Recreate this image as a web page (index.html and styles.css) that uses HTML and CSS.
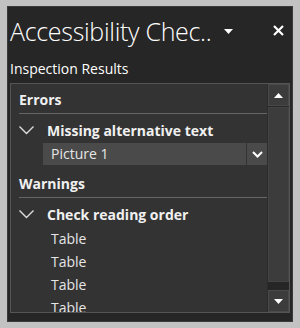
FILE: index.html
```html
<!DOCTYPE html>
<html lang="en">
<head>
    <meta charset="UTF-8">
    <title>Accessibility Checker</title>
    <link rel="stylesheet" href="styles.css">
</head>
<body>
    <div class="pane">
        <div class="pane-header">
            <span class="pane-title">Accessibility Chec..</span>
            <span class="pane-menu">
                <svg width="9" height="5" viewBox="0 0 9 5"><path d="M0 0h9L4.5 5z" fill="#fff"/></svg>
            </span>
            <span class="pane-close">
                <svg width="11" height="11" viewBox="0 0 11 11"><path d="M1 1l9 9M10 1l-9 9" stroke="#fff" stroke-width="2.2"/></svg>
            </span>
        </div>

        <div class="section-label">Inspection Results</div>

        <div class="results">
            <div class="results-list">
                <div class="group-head">Errors</div>
                <div class="issue">
                    <svg class="chev" width="15" height="9" viewBox="0 0 15 9"><path d="M0.5 0.5l7 7 7-7" fill="none" stroke="#ddd" stroke-width="1.4"/></svg>
                    <span>Missing alternative text</span>
                </div>
                <div class="item selected">
                    <span>Picture 1</span>
                    <span class="item-btn">
                        <svg width="11" height="7" viewBox="0 0 11 7"><path d="M1 1l4.5 4.5L10 1" fill="none" stroke="#fff" stroke-width="2"/></svg>
                    </span>
                </div>

                <div class="group-head">Warnings</div>
                <div class="issue">
                    <svg class="chev" width="15" height="9" viewBox="0 0 15 9"><path d="M0.5 0.5l7 7 7-7" fill="none" stroke="#ddd" stroke-width="1.4"/></svg>
                    <span>Check reading order</span>
                </div>
                <div class="item">Table</div>
                <div class="item">Table</div>
                <div class="item">Table</div>
                <div class="item">Table</div>
            </div>

            <div class="scrollbar">
                <div class="scroll-btn">
                    <svg width="9" height="5" viewBox="0 0 9 5"><path d="M0 5h9L4.5 0z" fill="#fff"/></svg>
                </div>
                <div class="scroll-thumb"></div>
                <div class="scroll-btn">
                    <svg width="9" height="5" viewBox="0 0 9 5"><path d="M0 0h9L4.5 5z" fill="#fff"/></svg>
                </div>
            </div>
        </div>
    </div>
</body>
</html>
```

FILE: styles.css
```css
body {
    margin: 0;
    background: #c2c2c2;
    font-family: "Open Sans", "Noto Sans", sans-serif;
    color: #f0f0f0;
}
.pane {
    margin: 6px 7px 0 7px;
    height: 316px;
    box-sizing: border-box;
    background: #262626;
    border: 1px solid #3a3a3a;
    padding: 0 2px;
    display: flex;
    flex-direction: column;
}
.pane-header {
    display: flex;
    align-items: center;
    height: 47px;
}
.pane-title {
    font-size: 25px;
    font-weight: 300;
    color: #fff;
    white-space: nowrap;
    letter-spacing: -0.3px;
}
.pane-menu {
    margin-left: 13px;
    display: flex;
    margin-top: 2px;
}
.pane-close {
    margin-left: auto;
    margin-right: 6px;
    display: flex;
}
.section-label {
    font-size: 14px;
    color: #fff;
    margin-top: 5px;
    height: 24px;
}
.results {
    flex: 1;
    margin-bottom: 8px;
    border: 1px solid #555;
    background: #333;
    display: flex;
    overflow: hidden;
}
.results-list {
    flex: 1;
    padding: 0 0 0 8px;
    overflow: hidden;
}
.group-head {
    font-size: 14px;
    font-weight: 700;
    height: 29px;
    line-height: 31px;
    border-bottom: 1px solid #666;
    margin-bottom: 3px;
}
.issue {
    display: flex;
    align-items: center;
    font-size: 14px;
    font-weight: 700;
    height: 26px;
}
.chev {
    margin-right: 13px;
}
.item {
    font-size: 14px;
    color: #e6e6e6;
    height: 23px;
    line-height: 23px;
    padding-left: 32px;
}
.item.selected {
    display: flex;
    justify-content: space-between;
    background: #4a4a4a;
    margin-left: 24px;
    padding-left: 8px;
    height: 22px;
    line-height: 22px;
    margin-bottom: 3px;
}
.item-btn {
    width: 20px;
    display: flex;
    align-items: center;
    justify-content: center;
    border-left: 1px solid #333;
}
.scrollbar {
    width: 21px;
    display: flex;
    flex-direction: column;
    background: #262626;
    border-left: 1px solid #2c2c2c;
}
.scroll-btn {
    height: 20px;
    display: flex;
    align-items: center;
    justify-content: center;
    background: #3c3c3c;
    border: 1px solid #4a4a4a;
}
.scroll-thumb {
    flex: 1;
    margin: 1px 0 8px 0;
    background: #3c3c3c;
    border: 1px solid #444;
}
```
